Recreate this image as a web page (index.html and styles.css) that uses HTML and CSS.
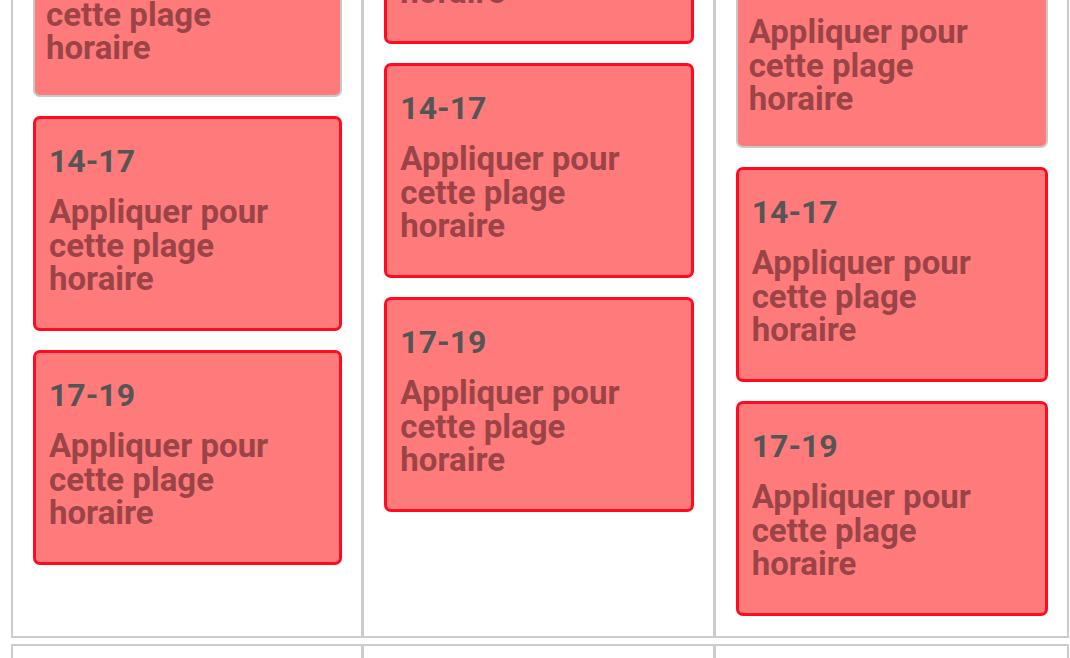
FILE: index.html
```html
<!DOCTYPE html>
<html lang="fr">
<head>
<meta charset="utf-8">
<title>Plages horaires</title>
<link rel="stylesheet" href="styles.css">
</head>
<body>
<div class="page">
  <div class="week">
    <div class="day day--a">
      <div class="slot slot--idle"><div class="slot-time">11-14</div><div class="slot-text">Appliquer pour cette plage horaire</div></div>
      <div class="slot"><div class="slot-time">14-17</div><div class="slot-text">Appliquer pour cette plage horaire</div></div>
      <div class="slot"><div class="slot-time">17-19</div><div class="slot-text">Appliquer pour cette plage horaire</div></div>
    </div>
    <div class="day day--b">
      <div class="slot"><div class="slot-time">11-14</div><div class="slot-text">Appliquer pour cette plage horaire</div></div>
      <div class="slot"><div class="slot-time">14-17</div><div class="slot-text">Appliquer pour cette plage horaire</div></div>
      <div class="slot"><div class="slot-time">17-19</div><div class="slot-text">Appliquer pour cette plage horaire</div></div>
    </div>
    <div class="day day--c">
      <div class="slot slot--idle"><div class="slot-time">11-14</div><div class="slot-text">Appliquer pour cette plage horaire</div></div>
      <div class="slot"><div class="slot-time">14-17</div><div class="slot-text">Appliquer pour cette plage horaire</div></div>
      <div class="slot"><div class="slot-time">17-19</div><div class="slot-text">Appliquer pour cette plage horaire</div></div>
    </div>
  </div>
  <div class="week">
    <div class="day">
      <div class="slot"><div class="slot-time">8-11</div><div class="slot-text">Appliquer pour cette plage horaire</div></div>
    </div>
    <div class="day">
      <div class="slot"><div class="slot-time">8-11</div><div class="slot-text">Appliquer pour cette plage horaire</div></div>
    </div>
    <div class="day">
      <div class="slot"><div class="slot-time">8-11</div><div class="slot-text">Appliquer pour cette plage horaire</div></div>
    </div>
  </div>
</div>
</body>
</html>
```
FILE: styles.css
```css
html, body {
  margin: 0;
  padding: 0;
  background: #ffffff;
}
body {
  font-family: Roboto, "Liberation Sans", Arial, sans-serif;
  overflow: hidden;
}
.page {
  padding-left: 11px;
  margin-top: -193px;
}
.week {
  width: 1058px;
  box-sizing: border-box;
  border: 2px solid #cccccc;
  display: grid;
  grid-template-columns: repeat(3, 1fr);
  margin-bottom: 6px;
}
.day {
  padding: 20px 19px 20px 20px;
  min-width: 0;
}
.day:not(:last-child) {
  border-right: 3px solid #cccccc;
}
.day--a { padding-top: 79px; }
.day--c { padding-top: 130px; }
.slot {
  background: #ff7b7b;
  border: 3px solid #ff0a1e;
  border-radius: 7px;
  padding: 26px 13px 32.5px;
  margin-bottom: 19px;
}
.slot:last-child { margin-bottom: 0; }
.slot--idle {
  border: 2px solid #c9c9c9;
  padding: 24px 11px 30.5px;
}
.slot-time {
  font-size: 32px;
  line-height: 33.5px;
  font-weight: 700;
  color: #555555;
  margin-bottom: 16.5px;
}
.slot-text {
  font-size: 33px;
  line-height: 33.5px;
  font-weight: 700;
  color: #9b4447;
  padding-right: 24px;
}
```
